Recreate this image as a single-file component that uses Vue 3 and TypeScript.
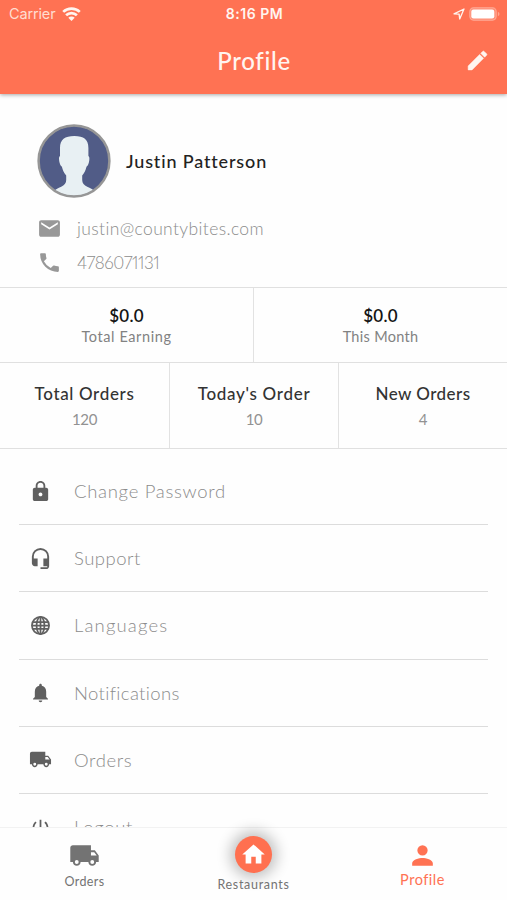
<script setup lang="ts">
interface Label {
  label: string
  tracking: number
}
interface MenuItem extends Label {
  icon: string
}

const icons: Record<string, string> = {
  lock: 'M18 8h-1V6c0-2.760-2.240-5-5-5S7 3.240 7 6v2H6c-1.100 0-2 .9-2 2v10c0 1.100.9 2 2 2h12c1.100 0 2-.9 2-2V10c0-1.100-.9-2-2-2zm-6 9c-1.100 0-2-.9-2-2s.9-2 2-2 2 .9 2 2-.9 2-2 2zm3.100-9H8.900V6c0-1.710 1.390-3.100 3.100-3.100s3.100 1.390 3.100 3.100v2z',
  headset: 'M12 1a9 9 0 0 0-9 9v7c0 1.660 1.340 3 3 3h3v-8H5v-2a7 7 0 0 1 14 0v2h-4v8h4v1h-7v2h6c1.660 0 3-1.340 3-3V10a9 9 0 0 0-9-9z',
  bell: 'M12 23c1.300 0 2-.9 2-2h-4c0 1.100.7 2 2 2zm6.500-6v-6c0-3.300-1.800-5.900-5-6.600V3.500c0-.83-.67-1.500-1.500-1.500s-1.500.67-1.500 1.500v.9c-3.200.7-5 3.300-5 6.600v6L3.500 19v1h17v-1l-2-2z',
  truck: 'M20 8h-3V4H3c-1.100 0-2 .9-2 2v11h2c0 1.660 1.340 3 3 3s3-1.340 3-3h6c0 1.660 1.340 3 3 3s3-1.340 3-3h2v-5l-3-4zM6 18.500a1.500 1.500 0 1 1 0-3 1.500 1.500 0 0 1 0 3zm13.500-9 1.960 2.500H17V9.500h2.500zM18 18.500a1.500 1.500 0 1 1 0-3 1.500 1.500 0 0 1 0 3z',
  power: 'M13 3h-2v10h2V3zm4.830 2.170-1.420 1.420A6.920 6.920 0 0 1 19 12a7 7 0 1 1-11.420-5.420L6.170 5.170A9 9 0 1 0 21 12c0-2.740-1.230-5.180-3.170-6.830z'
}

const menu: MenuItem[] = [
  { label: 'Change Password', icon: 'lock', tracking: 0.7 },
  { label: 'Support', icon: 'headset', tracking: 0.5 },
  { label: 'Languages', icon: 'globe', tracking: 1.15 },
  { label: 'Notifications', icon: 'bell', tracking: 0.35 },
  { label: 'Orders', icon: 'truck', tracking: 0.6 },
  { label: 'Logout', icon: 'power', tracking: 0.7 }
]

const earnings: (Label & { value: string })[] = [
  { label: 'Total Earning', value: '$0.0', tracking: 0.6 },
  { label: 'This Month', value: '$0.0', tracking: 0.3 }
]

const counts: (Label & { value: number })[] = [
  { label: 'Total Orders', value: 120, tracking: 0.65 },
  { label: "Today's Order", value: 10, tracking: 0.7 },
  { label: 'New Orders', value: 4, tracking: 0.45 }
]
</script>

<template>
  <div class="screen">
    <header class="top">
      <div class="status">
        <div class="carrier">
          <span class="carrier-name">Carrier</span>
          <svg class="wifi" viewBox="0 0 19 14">
            <g fill="none" stroke="currentColor" stroke-width="2.700">
              <path d="M1.200 4.900a12 12 0 0 1 16.600 0" />
              <path d="M4.100 8.200a7.800 7.800 0 0 1 10.800 0" />
            </g>
            <path d="M9.500 14 6.300 10.800a4.500 4.500 0 0 1 6.400 0z" fill="currentColor" />
          </svg>
        </div>
        <span class="clock">8:16 PM</span>
        <div class="indicators">
          <svg class="location" viewBox="0 0 12 12">
            <path d="M1 5.800 11 1 6.700 11 6.100 6.200z" fill="none" stroke="currentColor" stroke-width="1.300" stroke-linejoin="round" />
          </svg>
          <svg class="battery" viewBox="0 0 31 14">
            <rect x=".7" y=".7" width="26.600" height="12.600" rx="4" fill="#fff" fill-opacity=".2" stroke="currentColor" stroke-opacity=".3" stroke-width="1.200" />
            <rect x="2.300" y="2.600" width="23" height="8.800" rx="2.200" fill="#fff" />
            <path d="M28.900 4.800q1.600.7 1.600 2.200t-1.600 2.200z" fill="currentColor" fill-opacity=".4" />
          </svg>
        </div>
      </div>
      <div class="title-bar">
        <h1>Profile</h1>
        <svg class="edit" viewBox="0 0 24 24">
          <path fill="currentColor" stroke="currentColor" stroke-width=".5" stroke-linejoin="round" d="M3 17.250V21h3.750L17.810 9.940l-3.750-3.750L3 17.250zM20.710 7.040a1 1 0 0 0 0-1.410l-2.340-2.340a1 1 0 0 0-1.410 0l-1.830 1.830 3.750 3.750 1.830-1.830z" />
        </svg>
      </div>
    </header>

    <main class="content">
      <section class="person">
        <div class="identity">
          <svg class="avatar" viewBox="0 0 74 74">
            <defs><clipPath id="face"><circle cx="37" cy="37" r="35" /></clipPath></defs>
            <circle cx="37" cy="37" r="35" fill="#515c87" />
            <path clip-path="url(#face)" fill="#e8f0f3" d="M37.300 12c-9.500 0-14.300 3.500-14.300 12v8c-1.300.8-1.100 3.500-.6 6 .6 2.800 1.500 4 2.500 4.800.9 3.600 2 6.200 4.300 8.700v4.500c0 3.200-1.900 5-5 6.700-3.200 1.500-5.500 2.200-7 4.300v7h40v-7c-1.500-2.100-3.800-2.800-7-4.300-3.100-1.700-5-3.500-5-6.700v-4.500c2.300-2.500 3.400-5.100 4.300-8.700 1-.8 1.900-2 2.500-4.800.5-2.500.7-5.200-.6-6v-8c0-8.500-4.600-12-14.100-12z" />
            <circle cx="37" cy="37" r="35.400" fill="none" stroke="#969696" stroke-width="2.500" />
          </svg>
          <h2>Justin Patterson</h2>
        </div>
        <div class="contact">
          <svg viewBox="0 0 24 24"><path fill="currentColor" d="M20 4H4c-1.100 0-2 .9-2 2v12c0 1.100.9 2 2 2h16c1.100 0 2-.9 2-2V6c0-1.100-.9-2-2-2zm0 4-8 5-8-5V6l8 5 8-5v2z" /></svg>
          <span class="email">justin@countybites.com</span>
        </div>
        <div class="contact">
          <svg viewBox="0 0 24 24"><path fill="currentColor" d="M6.620 10.790a15.150 15.150 0 0 0 6.590 6.590l2.200-2.200a1 1 0 0 1 1.020-.24c1.120.37 2.330.57 3.570.57.55 0 1 .45 1 1V20c0 .55-.45 1-1 1A17 17 0 0 1 3 4c0-.55.45-1 1-1h3.500c.55 0 1 .45 1 1 0 1.250.2 2.450.57 3.570.11.35.03.74-.25 1.020l-2.200 2.200z" /></svg>
          <span class="phone">4786071131</span>
        </div>
      </section>

      <section class="earnings">
        <div v-for="e in earnings" :key="e.label" class="earning">
          <strong>{{ e.value }}</strong>
          <span :style="{ letterSpacing: e.tracking + 'px' }">{{ e.label }}</span>
        </div>
      </section>

      <section class="counts">
        <div v-for="c in counts" :key="c.label" class="count">
          <strong :style="{ letterSpacing: c.tracking + 'px' }">{{ c.label }}</strong>
          <span>{{ c.value }}</span>
        </div>
      </section>

      <ul class="menu">
        <li v-for="m in menu" :key="m.label">
          <span class="icon-slot">
            <svg v-if="m.icon === 'globe'" class="menu-icon" viewBox="0 0 24 24" fill="none" stroke="currentColor" stroke-width="2">
              <circle cx="12" cy="12" r="9.800" />
              <ellipse cx="12" cy="12" rx="4.500" ry="9.800" />
              <path d="M12 2.500v19M2.500 12h19M3.500 8.200h17M3.500 15.800h17" />
            </svg>
            <svg v-else class="menu-icon" :class="m.icon" viewBox="0 0 24 24"><path fill="currentColor" :d="icons[m.icon]" /></svg>
          </span>
          <span :style="{ letterSpacing: m.tracking + 'px' }">{{ m.label }}</span>
        </li>
      </ul>
    </main>

    <nav class="tabs">
      <div class="tab">
        <svg class="tab-icon" viewBox="0 0 24 24"><path fill="currentColor" :d="icons.truck" /></svg>
        <span class="tab-orders">Orders</span>
      </div>
      <div class="tab">
        <div class="home">
          <svg viewBox="0 0 24 24"><path fill="currentColor" d="M10 20v-6h4v6h5v-8h3L12 3 2 12h3v8z" /></svg>
        </div>
        <span class="tab-restaurants">Restaurants</span>
      </div>
      <div class="tab active">
        <svg class="tab-icon" viewBox="0 0 24 24"><path fill="currentColor" d="M12 12a4 4 0 1 0 0-8 4 4 0 0 0 0 8zm0 2c-2.670 0-8 1.340-8 4v2h16v-2c0-2.660-5.330-4-8-4z" /></svg>
        <span class="tab-profile">Profile</span>
      </div>
    </nav>
  </div>
</template>

<style>
body {
  background: #fff;
  overflow: hidden;
}
</style>

<style scoped>
* {
  box-sizing: border-box;
}
.screen {
  width: 507px;
  height: 900px;
  display: flex;
  flex-direction: column;
  overflow: hidden;
  background: #fefefe;
  font-family: Lato, "Open Sans", sans-serif;
  font-variant-ligatures: none;
  white-space: nowrap;
}
svg {
  display: block;
  flex: none;
}
.top {
  flex: none;
  height: 94px;
  background: #ff7253;
  color: #fff5f0;
  box-shadow: 0 1px 4px rgba(0, 0, 0, 0.35);
  z-index: 1;
}
.status {
  display: grid;
  grid-template-columns: 1fr auto 1fr;
  align-items: center;
  height: 27px;
  padding: 0 7px 0 9px;
  font-family: Inter, sans-serif;
}
.carrier {
  display: flex;
  align-items: center;
  gap: 7px;
}
.carrier-name {
  font-size: 14.500px;
  letter-spacing: -0.150px;
  color: #ffddd0;
}
.wifi {
  width: 19px;
  height: 14px;
}
.clock {
  font-size: 14px;
  font-weight: 600;
  letter-spacing: 0.550px;
}
.indicators {
  display: flex;
  justify-content: flex-end;
  align-items: center;
  gap: 4px;
}
.location {
  width: 12px;
  height: 12px;
}
.battery {
  width: 31px;
  height: 14px;
}
.title-bar {
  display: grid;
  grid-template-columns: 1fr auto 1fr;
  align-items: center;
  height: 67px;
  padding-right: 17px;
  padding-left: 18px;
}
h1 {
  grid-column: 2;
  margin: 0;
  font-size: 24px;
  font-weight: 500;
  line-height: 66px;
  letter-spacing: 0.700px;
}
.edit {
  justify-self: end;
  width: 25px;
  height: 25px;
}
.content {
  flex: 1;
  min-height: 0;
  overflow: hidden;
}
.person {
  height: 193px;
  padding: 30px 0 0 37px;
}
.identity {
  display: flex;
  align-items: center;
  gap: 15px;
  height: 74px;
  margin-bottom: 13px;
}
.avatar {
  width: 74px;
  height: 74px;
}
h2 {
  margin: 0;
  font-size: 18px;
  font-weight: 500;
  letter-spacing: 0.850px;
  color: #222;
}
.contact {
  display: flex;
  align-items: center;
  gap: 15px;
  height: 34px;
  font-size: 17.500px;
  font-weight: 300;
  color: #8c8c8c;
}
.contact svg {
  width: 25px;
  height: 25px;
  color: #989898;
}
.email {
  letter-spacing: 0.370px;
}
.phone {
  font-size: 17px;
  font-variant-numeric: proportional-nums;
  letter-spacing: -0.450px;
}
.earnings,
.counts {
  display: grid;
  border-top: 1px solid #e0e0e0;
}
.earnings {
  grid-template-columns: 254px 1fr;
  height: 75px;
}
.counts {
  grid-template-columns: 170px 169px 1fr;
  height: 87px;
  border-bottom: 1px solid #e0e0e0;
}
.earning,
.count {
  display: flex;
  flex-direction: column;
  align-items: center;
  border-right: 1px solid #e2e2e2;
}
.earning:last-child,
.count:last-child {
  border-right: 0;
}
.earning {
  padding-top: 17px;
}
.earning strong {
  font-size: 17px;
  font-weight: 600;
  line-height: 21px;
  letter-spacing: 0.200px;
  color: #151515;
}
.earning span {
  font-size: 14.500px;
  line-height: 21px;
  color: #828282;
}
.count {
  padding-top: 19px;
}
.count strong {
  font-size: 17px;
  font-weight: 500;
  line-height: 24px;
  color: #333;
}
.count span {
  font-size: 15px;
  line-height: 26px;
  letter-spacing: -0.400px;
  color: #929292;
}
.menu {
  list-style: none;
  margin: 0;
  padding: 9px 19px 0;
}
.menu li {
  display: flex;
  align-items: center;
  gap: 22px;
  height: 67.200px;
  padding-left: 10px;
  border-bottom: 1px solid #dcdcdc;
  font-size: 18.500px;
  font-weight: 300;
  color: #8c8c8c;
}
.icon-slot {
  display: grid;
  place-items: center;
  width: 23px;
  height: 23px;
}
.menu-icon {
  width: 21px;
  height: 21px;
  color: #606060;
}
.lock,
.headset,
.truck {
  width: 23px;
  height: 23px;
}
.tabs {
  flex: none;
  display: grid;
  grid-template-columns: repeat(3, 1fr);
  height: 73px;
  border-top: 1px solid #f2f2f2;
  background: #fefefe;
  color: #737373;
}
.tab {
  display: flex;
  flex-direction: column;
  align-items: center;
}
.tab-icon {
  width: 31px;
  height: 31px;
  margin-top: 12px;
}
.tab-orders,
.tab-restaurants {
  font-size: 12.500px;
}
.tab-orders {
  line-height: 21px;
  letter-spacing: 0.400px;
}
.tab-restaurants {
  line-height: 23px;
  letter-spacing: 0.700px;
}
.home {
  display: grid;
  place-items: center;
  width: 37px;
  height: 37px;
  margin-top: 8px;
  border-radius: 50%;
  background: #ff7050;
  color: #fff;
  box-shadow: 0 0 14px 5px rgba(0, 0, 0, 0.24);
}
.home svg {
  width: 27px;
  height: 27px;
}
.active {
  color: #ff7253;
}
.tab-profile {
  font-size: 14.500px;
  line-height: 18px;
  letter-spacing: 0.500px;
}
</style>
